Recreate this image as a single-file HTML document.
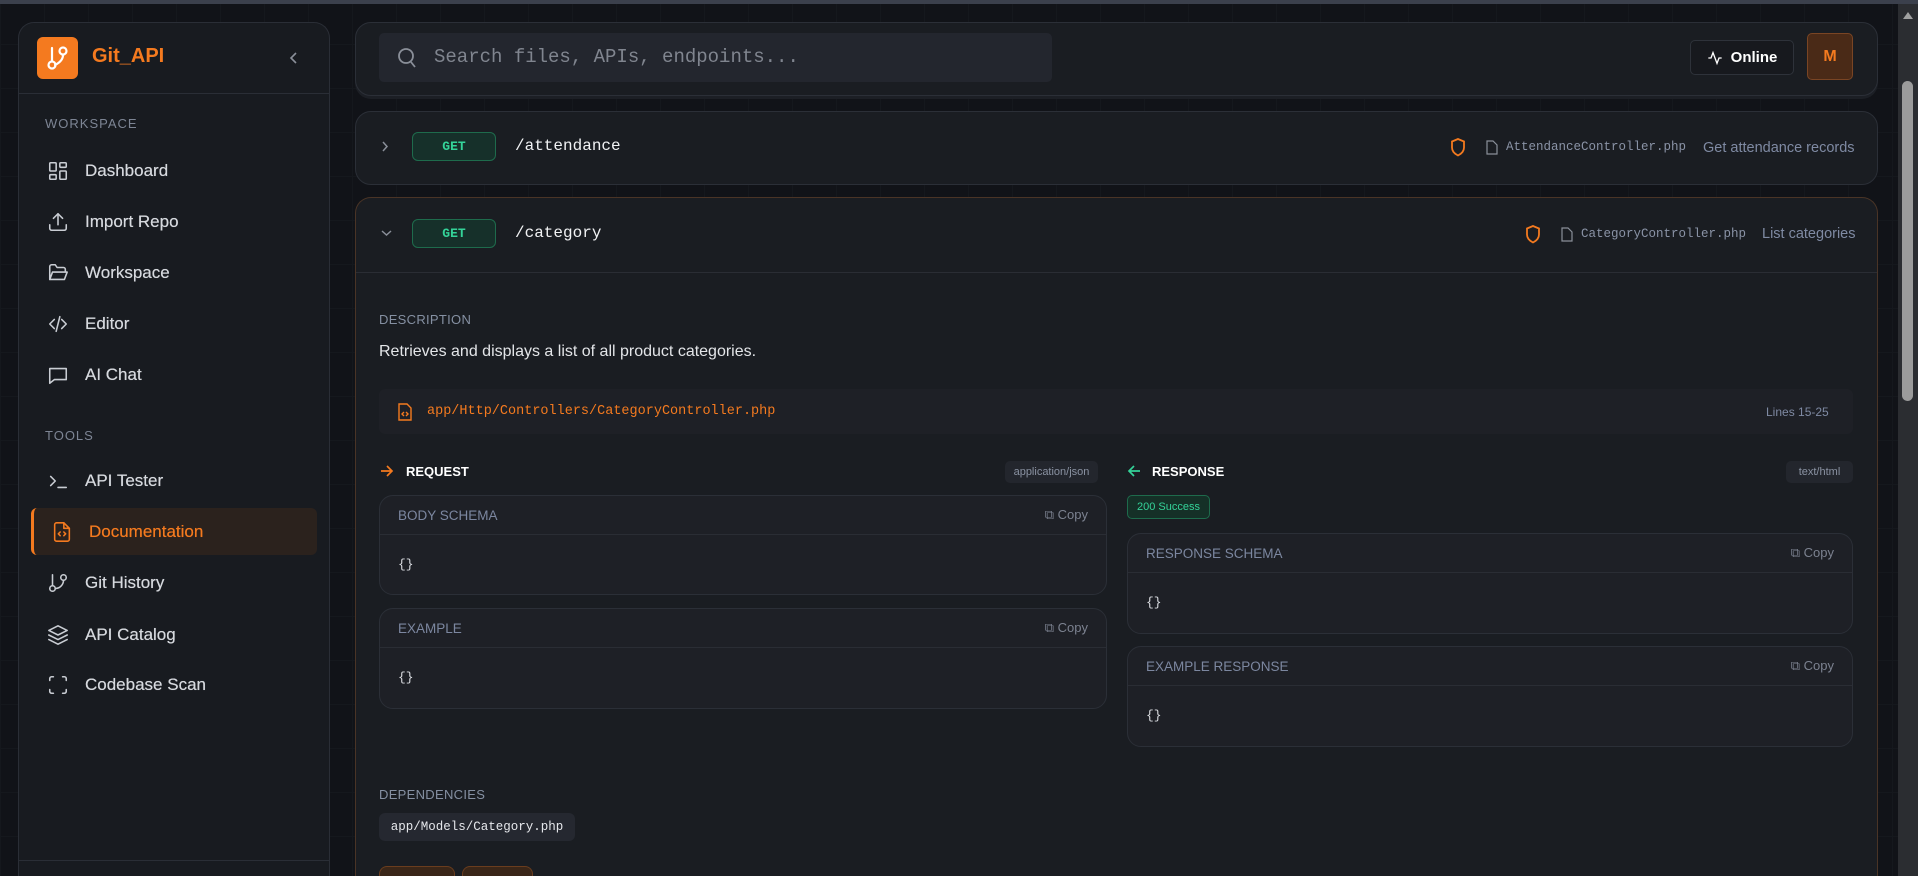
<!DOCTYPE html>
<html><head><meta charset="utf-8"><style>
*{box-sizing:border-box;margin:0;padding:0}
html,body{width:1918px;height:876px;overflow:hidden}
body{background:#111318;font-family:"Liberation Sans",sans-serif;color:#e5e7eb;position:relative;
background-image:linear-gradient(#15181d 1px,transparent 1px),linear-gradient(90deg,#15181d 1px,transparent 1px);background-size:44px 44px}
.abs{position:absolute}
.topbar{left:0;top:0;width:1918px;height:4px;background:#3b404c}
.side{left:18px;top:22px;width:312px;height:854px;background:#181b20;border:1px solid #2a2e36;border-bottom:none;border-radius:16px 16px 0 0}
.logo{left:37px;top:37px;width:41px;height:42px;background:#f47a1f;border-radius:6px}
.brand{left:92px;top:45px;font-size:20px;font-weight:bold;color:#f47a1f}
.sec{font-size:13px;letter-spacing:1px;color:#7d8594}
.item{left:47px;font-size:17px;color:#d6d9de;display:flex;align-items:center;gap:16px;height:24px;font-weight:bold;-webkit-text-stroke:0}
.item{font-weight:normal;text-shadow:0 0 0.4px #d6d9de}
.item svg{width:22px;height:22px;stroke:#c9cdd3;fill:none;stroke-width:1.7;stroke-linecap:round;stroke-linejoin:round}
.card{background:#1a1d22;border:1px solid #2b2f37;border-radius:16px}
.mono{font-family:"Liberation Mono",monospace}
.get{width:84px;height:29px;border:1px solid #1e6b4c;background:#16302a;border-radius:6px;color:#34d399;font-size:13px;font-weight:bold;display:flex;align-items:center;justify-content:center;font-family:"Liberation Mono",monospace}
.label{font-size:13px;color:#8590a2;letter-spacing:.3px}
.box{background:#1e2026;border:1px solid #2b2f37;border-radius:14px}
.bh{height:39px;border-bottom:1px solid #2a2d34;display:flex;align-items:center;justify-content:space-between;padding:0 18px;font-size:13.5px;color:#7c87a0}
.copy{font-size:13px;color:#7c8290;display:flex;align-items:center;gap:6px}
.bb{padding:22px 18px;font-family:"Liberation Mono",monospace;font-size:13px;color:#d9dbe0}
.chip{background:#23262d;border-radius:5px;font-size:11px;color:#8a92a2;display:flex;align-items:center;justify-content:center}
</style></head><body>
<div class="abs topbar"></div>
<div class="abs side"></div>
<div class="abs" style="left:19px;top:93px;width:310px;height:1px;background:#2a2e36"></div>
<div class="abs" style="left:19px;top:860px;width:310px;height:1px;background:#2a2e36"></div>
<div class="abs logo"><svg width="41" height="42" viewBox="0 0 41 42" fill="none" stroke="#fff" stroke-width="2.2" stroke-linecap="round"><line x1="15" y1="11" x2="15" y2="24"/><circle cx="15" cy="28" r="3.5"/><circle cx="26" cy="14" r="3.5"/><path d="M26 18c0 6-6 9-8 10"/></svg></div>
<div class="abs brand">Git_API</div>
<svg class="abs" style="left:289px;top:51px" width="10" height="14" viewBox="0 0 10 14" fill="none" stroke="#8a8f99" stroke-width="1.6"><path d="M7 2L2 7l5 5"/></svg>
<div class="abs sec" style="left:45px;top:116px">WORKSPACE</div>
<div class="abs item" style="top:159px"><svg viewBox="0 0 24 24"><rect x="3" y="3" width="7" height="9" rx="1"/><rect x="14" y="3" width="7" height="5" rx="1"/><rect x="14" y="12" width="7" height="9" rx="1"/><rect x="3" y="16" width="7" height="5" rx="1"/></svg>Dashboard</div>
<div class="abs item" style="top:210px"><svg viewBox="0 0 24 24"><path d="M21 15v4a2 2 0 0 1-2 2H5a2 2 0 0 1-2-2v-4"/><path d="M17 8l-5-5-5 5"/><path d="M12 3v12"/></svg>Import Repo</div>
<div class="abs item" style="top:261px"><svg viewBox="0 0 24 24"><path d="M3 19V5a2 2 0 0 1 2-2h4l2 3h7a2 2 0 0 1 2 2v2"/><path d="M3 19l3-8h16l-3 8z"/></svg>Workspace</div>
<div class="abs item" style="top:312px"><svg viewBox="0 0 24 24"><path d="M8 7l-5 5 5 5M16 7l5 5-5 5M14 4l-4 16"/></svg>Editor</div>
<div class="abs item" style="top:363px"><svg viewBox="0 0 24 24"><path d="M3 5h18v12H8l-5 4z"/></svg>AI Chat</div>
<div class="abs sec" style="left:45px;top:428px">TOOLS</div>
<div class="abs item" style="top:469px"><svg viewBox="0 0 24 24"><path d="M4 7l5 5-5 5M12 19h9"/></svg>API Tester</div>
<div class="abs" style="left:31px;top:508px;width:286px;height:47px;background:#2b221d;border-left:3px solid #f47a1f;border-radius:6px"></div>
<div class="abs item" style="top:520px;left:51px;color:#f47a1f;text-shadow:0 0 0.4px #f47a1f"><svg viewBox="0 0 24 24" style="stroke:#f47a1f"><path d="M14 2H6a2 2 0 0 0-2 2v16a2 2 0 0 0 2 2h12a2 2 0 0 0 2-2V8z"/><path d="M14 2v6h6M10 12l-2 2 2 2M14 12l2 2-2 2"/></svg>Documentation</div>
<div class="abs item" style="top:571px"><svg viewBox="0 0 24 24"><line x1="6" y1="3" x2="6" y2="15"/><circle cx="6" cy="18" r="3"/><circle cx="18" cy="6" r="3"/><path d="M18 9a9 9 0 0 1-9 9"/></svg>Git History</div>
<div class="abs item" style="top:623px"><svg viewBox="0 0 24 24"><path d="M12 2L2 7l10 5 10-5z"/><path d="M2 12l10 5 10-5M2 17l10 5 10-5"/></svg>API Catalog</div>
<div class="abs item" style="top:673px"><svg viewBox="0 0 24 24"><path d="M3 7V5a2 2 0 0 1 2-2h2M17 3h2a2 2 0 0 1 2 2v2M21 17v2a2 2 0 0 1-2 2h-2M7 21H5a2 2 0 0 1-2-2v-2"/></svg>Codebase Scan</div>

<!-- header -->
<div class="abs card" style="left:355px;top:22px;width:1523px;height:74px;box-shadow:0 3px 0 #1c1f25"></div>
<div class="abs" style="left:379px;top:33px;width:673px;height:49px;background:#23262e;border-radius:5px"></div>
<svg class="abs" style="left:397px;top:47px" width="20" height="22" viewBox="0 0 20 22" fill="none" stroke="#8a8f99" stroke-width="1.8"><circle cx="9" cy="9" r="7"/><path d="M14 15l4 5"/></svg>
<div class="abs mono" style="left:434px;top:46px;font-size:19px;color:#80858f">Search files, APIs, endpoints...</div>
<div class="abs" style="left:1690px;top:40px;width:104px;height:35px;border:1px solid #2e323a;border-radius:5px;background:#17191e;display:flex;align-items:center;justify-content:center;gap:8px;font-size:15px;font-weight:bold;color:#fff"><svg width="16" height="16" viewBox="0 0 24 24" fill="none" stroke="#fff" stroke-width="2"><path d="M2 12h4l3 -8 6 16 3-8h4"/></svg>Online</div>
<div class="abs" style="left:1807px;top:33px;width:46px;height:47px;background:#4a2a17;border:1px solid #7a4524;border-radius:5px;color:#f47a1f;font-weight:bold;font-size:16px;display:flex;align-items:center;justify-content:center">M</div>

<!-- attendance -->
<div class="abs card" style="left:355px;top:111px;width:1523px;height:74px"></div>
<svg class="abs" style="left:381px;top:140px" width="8" height="13" viewBox="0 0 8 13" fill="none" stroke="#8a8f99" stroke-width="1.5"><path d="M2 2l4 4.5L2 11"/></svg>
<div class="abs get" style="left:412px;top:132px">GET</div>
<div class="abs mono" style="left:515px;top:137px;font-size:16px;color:#f1f2f4">/attendance</div>
<svg class="abs" style="left:1450px;top:138px" width="16" height="19" viewBox="0 0 16 19" fill="none" stroke="#f47a1f" stroke-width="1.8"><path d="M8 1L2 3.5v6c0 4 3 6.5 6 8 3-1.5 6-4 6-8v-6z"/></svg>
<svg class="abs" style="left:1486px;top:140px" width="12" height="15" viewBox="0 0 12 15" fill="none" stroke="#8a8f99" stroke-width="1.2"><path d="M1 1h6l4 4v9H1z"/></svg>
<div class="abs mono" style="left:1506px;top:140px;font-size:12.5px;color:#8a93a6">AttendanceController.php</div>
<div class="abs" style="left:1703px;top:140px;font-size:14.5px;color:#7f8aa3">Get attendance records</div>

<!-- category -->
<div class="abs card" style="left:355px;top:197px;width:1523px;height:679px;border-color:#4a3426;border-bottom:none;border-radius:16px 16px 0 0"></div>
<div class="abs" style="left:356px;top:272px;width:1521px;height:1px;background:#2a2d34"></div>
<svg class="abs" style="left:380px;top:229px" width="13" height="8" viewBox="0 0 13 8" fill="none" stroke="#8a8f99" stroke-width="1.5"><path d="M2 2l4.5 4L11 2"/></svg>
<div class="abs get" style="left:412px;top:219px">GET</div>
<div class="abs mono" style="left:515px;top:224px;font-size:16px;color:#f1f2f4">/category</div>
<svg class="abs" style="left:1525px;top:225px" width="16" height="19" viewBox="0 0 16 19" fill="none" stroke="#f47a1f" stroke-width="1.8"><path d="M8 1L2 3.5v6c0 4 3 6.5 6 8 3-1.5 6-4 6-8v-6z"/></svg>
<svg class="abs" style="left:1561px;top:227px" width="12" height="15" viewBox="0 0 12 15" fill="none" stroke="#8a8f99" stroke-width="1.2"><path d="M1 1h6l4 4v9H1z"/></svg>
<div class="abs mono" style="left:1581px;top:227px;font-size:12.5px;color:#8a93a6">CategoryController.php</div>
<div class="abs" style="left:1762px;top:226px;font-size:14.5px;color:#7f8aa3">List categories</div>

<div class="abs label" style="left:379px;top:312px">DESCRIPTION</div>
<div class="abs" style="left:379px;top:343px;font-size:16px;color:#e3e5e8">Retrieves and displays a list of all product categories.</div>
<div class="abs" style="left:379px;top:389px;width:1474px;height:45px;background:#1e2026;border-radius:6px"></div>
<svg class="abs" style="left:398px;top:403px" width="14" height="18" viewBox="0 0 14 18" fill="none" stroke="#f47a1f" stroke-width="1.4"><path d="M1 1h8l4 4v12H1z"/><path d="M6 9l-2 2 2 2M8 9l2 2-2 2"/></svg>
<div class="abs mono" style="left:427px;top:404px;font-size:13.5px;color:#f47a1f">app/Http/Controllers/CategoryController.php</div>
<div class="abs" style="left:1766px;top:405px;font-size:12px;color:#7f8aa3">Lines 15-25</div>

<!-- request -->
<svg class="abs" style="left:380px;top:465px" width="14" height="12" viewBox="0 0 14 12" fill="none" stroke="#f47a1f" stroke-width="1.7"><path d="M1 6h11M7 1l5 5-5 5"/></svg>
<div class="abs" style="left:406px;top:464px;font-size:13px;font-weight:bold;color:#fff">REQUEST</div>
<div class="abs chip" style="left:1005px;top:461px;width:93px;height:22px">application/json</div>
<div class="abs box" style="left:379px;top:495px;width:728px;height:100px"><div class="bh">BODY SCHEMA<span class="copy">⧉ Copy</span></div><div class="bb">{}</div></div>
<div class="abs box" style="left:379px;top:608px;width:728px;height:101px"><div class="bh">EXAMPLE<span class="copy">⧉ Copy</span></div><div class="bb">{}</div></div>

<!-- response -->
<svg class="abs" style="left:1127px;top:465px" width="14" height="12" viewBox="0 0 14 12" fill="none" stroke="#34d399" stroke-width="1.7"><path d="M13 6H2M7 1L2 6l5 5"/></svg>
<div class="abs" style="left:1152px;top:464px;font-size:13px;font-weight:bold;color:#fff">RESPONSE</div>
<div class="abs chip" style="left:1786px;top:461px;width:67px;height:22px">text/html</div>
<div class="abs" style="left:1127px;top:495px;width:83px;height:24px;background:#153027;border:1px solid #1e6b4c;border-radius:5px;color:#34d399;font-size:11px;display:flex;align-items:center;justify-content:center">200 Success</div>
<div class="abs box" style="left:1127px;top:533px;width:726px;height:101px"><div class="bh">RESPONSE SCHEMA<span class="copy">⧉ Copy</span></div><div class="bb">{}</div></div>
<div class="abs box" style="left:1127px;top:646px;width:726px;height:101px"><div class="bh">EXAMPLE RESPONSE<span class="copy">⧉ Copy</span></div><div class="bb">{}</div></div>

<div class="abs label" style="left:379px;top:787px">DEPENDENCIES</div>
<div class="abs mono" style="left:379px;top:813px;width:196px;height:28px;background:#252830;border-radius:6px;font-size:12.5px;color:#e5e7eb;display:flex;align-items:center;justify-content:center">app/Models/Category.php</div>
<div class="abs" style="left:379px;top:866px;width:76px;height:10px;background:#3a2618;border:1px solid #6a3d1e;border-bottom:none;border-radius:8px 8px 0 0"></div>
<div class="abs" style="left:462px;top:866px;width:71px;height:10px;background:#3a2618;border:1px solid #6a3d1e;border-bottom:none;border-radius:8px 8px 0 0"></div>

<!-- scrollbar -->
<div class="abs" style="left:1898px;top:4px;width:20px;height:872px;background:#2b2d31"></div>
<div class="abs" style="left:1903px;top:12px;width:0;height:0;border-left:5px solid transparent;border-right:5px solid transparent;border-bottom:7px solid #a0a0a0"></div>
<div class="abs" style="left:1902px;top:81px;width:11px;height:320px;background:#9b9b9b;border-radius:6px"></div>
</body></html>
